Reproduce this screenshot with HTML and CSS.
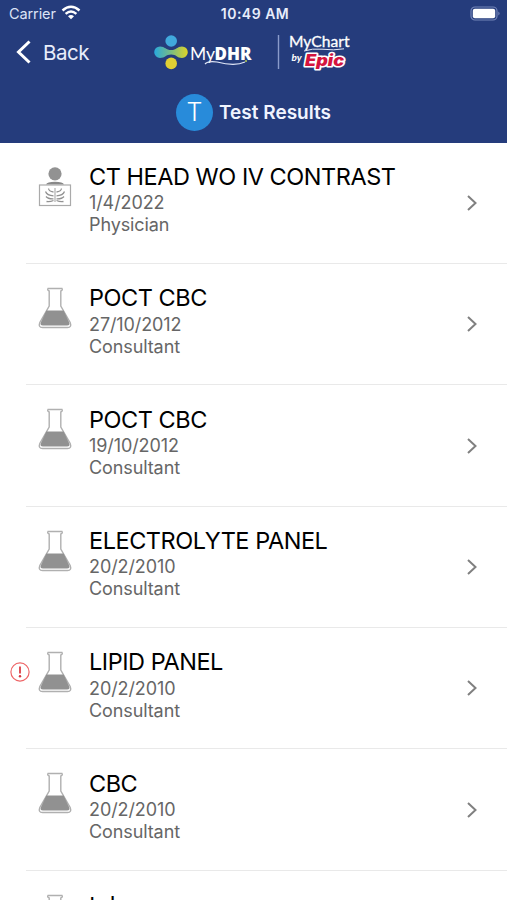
FILE: index.html
```
<!DOCTYPE html>
<html lang="en">
<head>
<meta charset="utf-8">
<title>Test Results</title>
<link rel="stylesheet" href="styles.css">
</head>
<body>
<svg class="defs" width="0" height="0">
  <symbol id="flask" viewBox="0 0 34 42">
    <path d="M10 1.5H24Q25 3.3 22.8 4V19L32.2 35.5Q34 40.5 29.5 40.5H4.5Q0 40.5 1.8 35.5L11.2 19V4Q9 3.3 10 1.5Z" fill="#fff" stroke="#b0b0b0" stroke-width="1.4"/>
    <path d="M8.3 23.5H25.7L31 35Q32.5 38.5 29 38.5H5Q1.5 38.5 3 35Z" fill="#919191"/>
  </symbol>
  <symbol id="chevron" viewBox="0 0 12 18">
    <path d="M2 2L9.5 9L2 16" fill="none" stroke="#808080" stroke-width="2"/>
  </symbol>
</svg>
<header class="header">
  <div class="status">
    <div class="carrier"><span>Carrier</span>
      <svg width="20" height="15" viewBox="0 0 20 15" fill="none" stroke="#fff" stroke-width="2.4"><path d="M1.5 5.5Q10-2.2 18.5 5.5M4.6 8.9Q10 4.2 15.4 8.9"/><path d="M7 11.2Q10 8.8 13 11.2L10 14.3Z" fill="#fff" stroke="none"/></svg>
    </div>
    <span class="clock">10:49 AM</span>
    <svg class="battery" width="31" height="16" viewBox="0 0 31 16"><rect x="1" y="1" width="26" height="13" rx="4" fill="none" stroke="#7485b8" stroke-width="1.2"/><rect x="2.8" y="2.8" width="22.4" height="9.4" rx="2" fill="#fff"/><path d="M28.3 5.5Q31 7.5 28.3 9.5Z" fill="#7485b8"/></svg>
  </div>
  <div class="nav">
    <div class="back">
      <svg width="16" height="24" viewBox="0 0 16 24"><path d="M13.5 1.5L2.5 12L13.5 22.5" fill="none" stroke="#fff" stroke-width="3"/></svg>
      <span>Back</span>
    </div>
    <svg class="brand" width="200" height="40" viewBox="152 32 200 40">
      <defs><linearGradient id="link"><stop offset="0" stop-color="#28a9dd"/><stop offset=".5" stop-color="#79bd83"/><stop offset="1" stop-color="#dfd326"/></linearGradient></defs>
      <circle cx="171.2" cy="41" r="5.8" fill="#41a9dd"/><circle cx="171.2" cy="63.4" r="5.8" fill="#e0d034"/>
      <path d="M160 46.4C165 46.4 166 50 171.2 50C176.5 50 177 46.4 182 46.4A5.8 5.8 0 0 1 182 58C177 58 176.5 54.5 171.2 54.5C166 54.5 165 58 160 58A5.8 5.8 0 0 1 160 46.4Z" fill="url(#link)"/>
      <text class="my" x="190" y="59.5" textLength="25" lengthAdjust="spacingAndGlyphs">My</text>
      <text class="dhr" x="214.5" y="59.5" textLength="37" lengthAdjust="spacingAndGlyphs">DHR</text>
      <path d="M205 64Q208 60.5 217 62Q235 66.8 245 62" fill="none" stroke="#e2e8f8" stroke-width="1.2"/>
      <circle cx="246" cy="61" r="1" fill="#b6cf54"/>
      <path d="M278.5 35V69" stroke="#8a9bcb" stroke-width="1.4"/>
      <text class="mychart" x="289" y="47" textLength="60.5" lengthAdjust="spacingAndGlyphs">MyChart</text>
      <path d="M304 51Q312 48.3 322 49.2Q334 50.7 344 48.8" fill="none" stroke="#e2e8f8" stroke-width="1"/>
      <text class="by" x="291.5" y="61">by</text>
      <text class="epic outline" x="305" y="65.5" textLength="39" lengthAdjust="spacingAndGlyphs">Epic</text>
    </svg>
  </div>
  <div class="heading"><span class="avatar">T</span><h1>Test Results</h1></div>
</header>
<main class="results">
  <article class="row">
    <svg class="icon" width="34" height="42" viewBox="0 0 34 42"><circle cx="17" cy="7.8" r="6.6" fill="#929292"/><path d="M8 18.5Q9 15.8 17 15.8T26 18.5Z" fill="#888"/><rect x="1.5" y="19" width="31" height="20.5" fill="#fff" stroke="#aaa" stroke-width="1.2"/><path d="M17 22V36" stroke="#bbb" stroke-width="1.4"/><path d="M10.5 22.5Q11 25.5 15.5 26M23.5 22.5Q23 25.5 18.5 26M7.5 25.5Q9 29.5 15.5 29.8M26.5 25.5Q25 29.5 18.5 29.8M8 30.5Q10 33 15.5 32.8M26 30.5Q24 33 18.5 32.8M8.5 35.5Q12 36 15.5 34.5M25.5 35.5Q22 36 18.5 34.5" fill="none" stroke="#929292" stroke-width="1.3"/></svg>
    <div class="details"><h2>CT HEAD WO IV CONTRAST</h2><p>1/4/2022</p><p>Physician</p></div>
    <svg class="chevron"><use href="#chevron"/></svg>
  </article>
  <article class="row">
    <svg class="icon"><use href="#flask"/></svg>
    <div class="details"><h2>POCT CBC</h2><p>27/10/2012</p><p>Consultant</p></div>
    <svg class="chevron"><use href="#chevron"/></svg>
  </article>
  <article class="row">
    <svg class="icon"><use href="#flask"/></svg>
    <div class="details"><h2>POCT CBC</h2><p>19/10/2012</p><p>Consultant</p></div>
    <svg class="chevron"><use href="#chevron"/></svg>
  </article>
  <article class="row">
    <svg class="icon"><use href="#flask"/></svg>
    <div class="details"><h2>ELECTROLYTE PANEL</h2><p>20/2/2010</p><p>Consultant</p></div>
    <svg class="chevron"><use href="#chevron"/></svg>
  </article>
  <article class="row">
    <svg class="alert" width="20" height="20" viewBox="0 0 20 20"><circle cx="10" cy="10" r="9.1" fill="none" stroke="#ee6668" stroke-width="1.2"/><path d="M10 4.5V11.5" stroke="#d9343b" stroke-width="1.7"/><circle cx="10" cy="14.2" r="1.2" fill="#d9343b"/></svg>
    <svg class="icon"><use href="#flask"/></svg>
    <div class="details"><h2>LIPID PANEL</h2><p>20/2/2010</p><p>Consultant</p></div>
    <svg class="chevron"><use href="#chevron"/></svg>
  </article>
  <article class="row">
    <svg class="icon"><use href="#flask"/></svg>
    <div class="details"><h2>CBC</h2><p>20/2/2010</p><p>Consultant</p></div>
    <svg class="chevron"><use href="#chevron"/></svg>
  </article>
  <article class="row last">
    <svg class="icon"><use href="#flask"/></svg>
    <div class="details"><h2>tube</h2></div>
  </article>
</main>
</body>
</html>
```
FILE: styles.css
```
* { box-sizing: border-box; }
body { margin: 0; height: 900px; overflow: hidden; background: #fff; font-family: Inter, "Liberation Sans", sans-serif; }
h1, h2, p { margin: 0; }
.defs { position: absolute; }
.header { height: 142.5px; background: #253c7c; color: #fff; }
.status { height: 28px; display: grid; grid-template-columns: 1fr auto 1fr; align-items: center; padding: 0 6px 2px 9px; font-size: 14.5px; }
.carrier { display: flex; align-items: center; gap: 5px; color: #dce3f6; letter-spacing: -0.1px; }
.carrier svg { margin-top: -2px; }
.clock { font-size: 14px; font-weight: 600; color: #e8edfb; letter-spacing: 0.5px; }
.battery { justify-self: end; margin-top: 1px; }
.nav { height: 48px; display: flex; align-items: center; padding: 0 0 0 16px; }
.back { width: 136px; display: flex; align-items: center; gap: 11px; font-size: 20.5px; letter-spacing: -0.5px; color: #e8edfb; }
.brand text { fill: #fff; font-family: Lato, sans-serif; }
.brand .my { font-size: 17px; }
.brand .dhr { font-family: "Open Sans", sans-serif; font-size: 17px; font-weight: 800; }
.brand .mychart { font-size: 15.5px; stroke: #fff; stroke-width: 0.3px; }
.brand .by { font-size: 10px; font-weight: 700; font-style: italic; }
.brand .epic { font-family: Inter, sans-serif; font-size: 15.5px; font-weight: 900; font-style: italic; fill: #d4143f; stroke: #fff; stroke-width: 3px; paint-order: stroke; stroke-linejoin: round; }
.heading { height: 66px; display: flex; align-items: center; justify-content: center; gap: 6px; padding-top: 6px; }
.avatar { width: 37px; height: 37px; border-radius: 50%; background: #288bda; display: flex; align-items: center; justify-content: center; font-size: 25px; font-weight: 300; }
.heading h1 { font-size: 19px; font-weight: 600; color: #f0f4ff; }
.results { height: 757.5px; overflow: hidden; }
.row { position: relative; height: 121.35px; margin-left: 26px; padding: 20.6px 29px 0 12px; display: flex; align-items: flex-start; border-bottom: 1px solid #e9e9e9; }
.last { height: 29px; overflow: hidden; border-bottom: 0; }
.icon { width: 34px; height: 42px; margin-top: 2.6px; flex: none; }
.details { flex: 1; margin-left: 17px; white-space: nowrap; }
.details h2 { font-size: 23.5px; line-height: 27px; margin-bottom: 2.2px; font-weight: 400; letter-spacing: -0.47px; color: #000; }
.details p { font-size: 18px; line-height: 22px; color: #666; letter-spacing: -0.1px; }
.chevron { width: 12px; height: 18px; margin-top: 31px; }
.alert { position: absolute; left: -16px; top: 34px; }
```
